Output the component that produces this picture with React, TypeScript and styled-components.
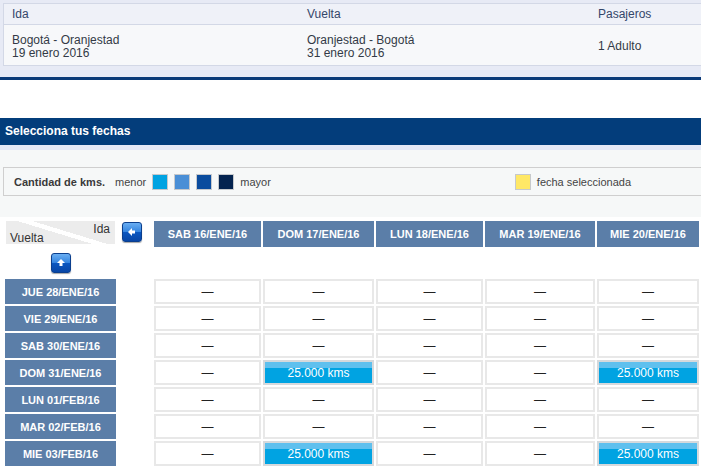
import React from "react";
import styled, { createGlobalStyle } from "styled-components";

const Global = createGlobalStyle`
  html, body { margin: 0; padding: 0; background: #fff; }
  body { font-family: "Liberation Sans", Arial, sans-serif; width: 701px; overflow: hidden; }
`;

const Summary = styled.div`
  background: #e7eaf5;
  padding: 3px 0 11px 3px;
  border-bottom: 3px solid #0a3a78;
`;

const SummaryTable = styled.div`
  display: grid;
  grid-template-columns: 295px 291px 1fr;
  border: 1px solid #d3d8e6;
  border-right: none;
  background: #f7f8fa;
`;

const HeadCell = styled.div`
  height: 20px;
  line-height: 20px;
  padding-left: 8px;
  font-size: 12px;
  color: #34466a;
  background: #eff1f8;
  border-bottom: 1px solid #d3d8e6;
`;

const BodyCell = styled.div`
  height: 40px;
  box-sizing: border-box;
  padding: 3px 0 0 8px;
  display: flex;
  flex-direction: column;
  justify-content: center;
  font-size: 12px;
  line-height: 13px;
  color: #333a46;
`;

const Spacer = styled.div`
  height: 38px;
`;

const SectionBar = styled.div`
  height: 27px;
  line-height: 27px;
  padding-left: 5px;
  background: #033d7b;
  color: #fff;
  font-weight: bold;
  font-size: 12px;
  border-bottom: 5px solid #e5e9f6;
`;

const LegendPanel = styled.div`
  background: #f6f8f8;
  padding: 17px 0 21px 3px;
`;

const LegendBox = styled.div`
  height: 27px;
  border: 1px solid #cfcfcf;
  border-right: none;
  display: flex;
  align-items: center;
  padding-left: 10px;
  font-size: 11px;
  color: #333;
`;

const LegendTitle = styled.span`
  font-weight: bold;
  margin-right: 10px;
  color: #3a3a3a;
`;

const LegendLabel = styled.span<{ $ml?: number }>`
  margin-left: ${(p) => p.$ml ?? 0}px;
  margin-right: 6px;
  color: #444;
`;

const Swatch = styled.span<{ $c: string; $ml?: number }>`
  display: inline-block;
  width: 16px;
  height: 16px;
  box-sizing: border-box;
  border: 1px solid #c6c9cc;
  background: ${(p) => p.$c};
  margin-right: 6px;
  margin-left: ${(p) => p.$ml ?? 0}px;
`;

const Grid = styled.div`
  display: grid;
  grid-template-columns: 111px 34px 107px 111px 107px 110px 102px;
  grid-template-rows: 26px 28px repeat(7, 25px);
  column-gap: 2px;
  row-gap: 2px;
  padding: 4px 0 0 5px;
`;

const Corner = styled.div`
  position: relative;
  margin: 0 1px 3px 1px;
  font-size: 12px;
  color: #333;
  background: linear-gradient(17deg, #ececec 0 47%, #ffffff 47% 55%, #ececec 55% 100%);
`;

const CornerTop = styled.span`
  position: absolute;
  right: 5px;
  top: 1px;
`;

const CornerBottom = styled.span`
  position: absolute;
  left: 4px;
  bottom: -1px;
`;

const ArrowBtn = styled.button<{ $self: string; $mt: number; $ml: number }>`
  width: 20px;
  height: 20px;
  padding: 0;
  margin: ${(p) => p.$mt}px 0 0 ${(p) => p.$ml}px;
  justify-self: ${(p) => p.$self};
  align-self: start;
  border: 1px solid #0b3f8e;
  border-radius: 3px;
  background: linear-gradient(#6aaef2 0%, #3585e0 48%, #0a56c0 52%, #0846a6 100%);
  box-shadow: 0 1px 1px rgba(0, 0, 0, 0.35);
  display: flex;
  align-items: center;
  justify-content: center;
`;

const ColHead = styled.div`
  background: #5b7ea8;
  color: #fff;
  font-weight: bold;
  font-size: 11px;
  display: flex;
  align-items: center;
  justify-content: center;
`;

const RowHead = styled.div`
  background: #5b7ea8;
  color: #fff;
  font-weight: bold;
  font-size: 11px;
  display: flex;
  align-items: center;
  justify-content: center;
`;

const Cell = styled.div<{ $hit?: boolean }>`
  box-sizing: border-box;
  border: 2px solid ${(p) => (p.$hit ? "#d6d9dc" : "#e8e8e8")};
  background: ${(p) =>
    p.$hit ? "linear-gradient(#5fc0ee 0 6px, #00a3e2 6px 100%)" : "#fff"};
  color: ${(p) => (p.$hit ? "#fff" : "#222")};
  font-size: 12px;
  display: flex;
  align-items: center;
  justify-content: center;
`;

const Empty = styled.div``;

const cols = ["SAB 16/ENE/16", "DOM 17/ENE/16", "LUN 18/ENE/16", "MAR 19/ENE/16", "MIE 20/ENE/16"];
const rows: { label: string; hits: number[] }[] = [
  { label: "JUE 28/ENE/16", hits: [] },
  { label: "VIE 29/ENE/16", hits: [] },
  { label: "SAB 30/ENE/16", hits: [] },
  { label: "DOM 31/ENE/16", hits: [1, 4] },
  { label: "LUN 01/FEB/16", hits: [] },
  { label: "MAR 02/FEB/16", hits: [] },
  { label: "MIE 03/FEB/16", hits: [1, 4] },
];

const LeftArrow = () => (
  <svg width="12" height="12" viewBox="0 0 12 12">
    <polygon points="2,6 6,2 6,10" fill="#fff" />
    <rect x="6" y="4.5" width="3" height="3" fill="#fff" />
  </svg>
);

const UpArrow = () => (
  <svg width="12" height="12" viewBox="0 0 12 12">
    <polygon points="6,2 2,6 10,6" fill="#fff" />
    <rect x="4.5" y="6" width="3" height="3" fill="#fff" />
  </svg>
);

export default function App() {
  return (
    <>
      <Global />
      <Summary>
        <SummaryTable>
          <HeadCell>Ida</HeadCell>
          <HeadCell>Vuelta</HeadCell>
          <HeadCell>Pasajeros</HeadCell>
          <BodyCell>
            <span>Bogotá - Oranjestad</span>
            <span>19 enero 2016</span>
          </BodyCell>
          <BodyCell>
            <span>Oranjestad - Bogotá</span>
            <span>31 enero 2016</span>
          </BodyCell>
          <BodyCell>
            <span>1 Adulto</span>
          </BodyCell>
        </SummaryTable>
      </Summary>
      <Spacer />
      <SectionBar>Selecciona tus fechas</SectionBar>
      <LegendPanel>
        <LegendBox>
          <LegendTitle>Cantidad de kms.</LegendTitle>
          <LegendLabel>menor</LegendLabel>
          <Swatch $c="#00a3e2" />
          <Swatch $c="#4a8fd6" />
          <Swatch $c="#0a4c9e" />
          <Swatch $c="#03234f" />
          <LegendLabel>mayor</LegendLabel>
          <Swatch $c="#ffe866" $ml={238} />
          <LegendLabel>fecha seleccionada</LegendLabel>
        </LegendBox>
      </LegendPanel>
      <Grid>
        <Corner>
          <CornerTop>Ida</CornerTop>
          <CornerBottom>Vuelta</CornerBottom>
        </Corner>
        <ArrowBtn $self="start" $mt={1} $ml={4} aria-label="anterior">
          <LeftArrow />
        </ArrowBtn>
        {cols.map((c) => (
          <ColHead key={c}>{c}</ColHead>
        ))}
        <ArrowBtn $self="center" $mt={4} $ml={0} aria-label="arriba">
          <UpArrow />
        </ArrowBtn>
        {Array.from({ length: 6 }).map((_, i) => (
          <Empty key={"e" + i} />
        ))}
        {rows.map((r) => (
          <React.Fragment key={r.label}>
            <RowHead>{r.label}</RowHead>
            <Empty />
            {cols.map((c, ci) =>
              r.hits.includes(ci) ? (
                <Cell key={c} $hit>
                  25.000 kms
                </Cell>
              ) : (
                <Cell key={c}>—</Cell>
              )
            )}
          </React.Fragment>
        ))}
      </Grid>
    </>
  );
}
